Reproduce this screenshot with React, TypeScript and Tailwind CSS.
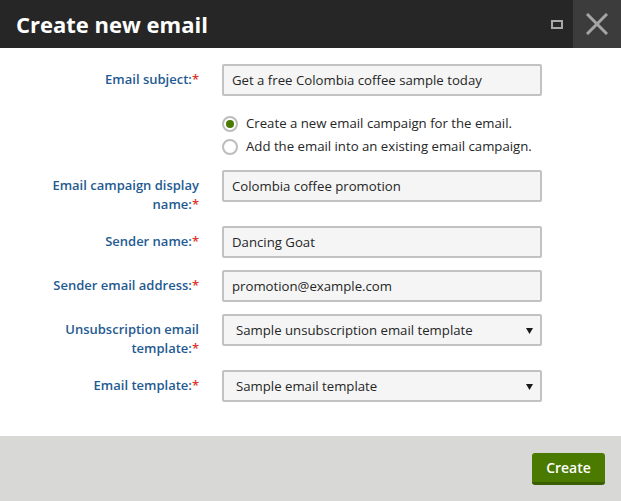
import React from "react";

const font = { fontFamily: '"Open Sans", "Noto Sans", sans-serif' };

function Label({ children }: { children: React.ReactNode }) {
  return (
    <div className="w-[199px] shrink-0 pt-[6px] text-right text-[13px] leading-[19px] font-semibold text-[#1f5b92]">
      {children}
      <span className="text-[#e0352b]">*</span>
    </div>
  );
}

function TextInput({ value }: { value: string }) {
  return (
    <div className="ml-[23px] flex h-[32px] w-[320px] items-center rounded-[2px] border-2 border-[#c2c2c2] bg-[#f5f5f5] pl-[8px] pt-[1px] text-[13.2px] text-[#262626]">
      {value}
    </div>
  );
}

function SelectInput({ value }: { value: string }) {
  return (
    <div className="ml-[23px] flex h-[32px] w-[320px] items-center justify-between rounded-[2px] border-2 border-[#c2c2c2] bg-[#f5f5f5] pl-[12px] pr-[7px] pt-[1px] text-[13.2px] text-[#262626]">
      <span>{value}</span>
      <svg width="7" height="6" viewBox="0 0 7 6">
        <path d="M0 0 H7 L3.5 6 Z" fill="#1a1a1a" />
      </svg>
    </div>
  );
}

function Radio({ checked, label }: { checked?: boolean; label: string }) {
  return (
    <div className="flex h-[23px] items-center">
      <span className="flex h-[16px] w-[16px] items-center justify-center rounded-full border-2 border-[#bdbdbd] bg-white">
        {checked && <span className="h-[8px] w-[8px] rounded-full bg-[#4a7a00]" />}
      </span>
      <span className="ml-[8px] text-[13.2px] text-[#262626]">{label}</span>
    </div>
  );
}

export default function App() {
  return (
    <div className="flex h-[501px] w-[621px] flex-col bg-white" style={font}>
      <div className="flex h-[48px] shrink-0 items-center bg-[#262626]">
        <div className="flex-1 pl-[16px] pt-[1px] text-[22px] font-bold text-white">Create new email</div>
        <div className="mr-[10px] h-[9px] w-[12px] border-2 border-[#a8a8a8]" />
        <div className="flex h-[48px] w-[48px] items-center justify-center bg-[#3c3c3c]">
          <svg width="22" height="22" viewBox="0 0 22 22">
            <path d="M1 1 L21 21 M21 1 L1 21" stroke="#a5a5a5" strokeWidth="3" />
          </svg>
        </div>
      </div>
      <div className="flex flex-1 flex-col pt-[16px]">
        <div className="flex">
          <Label>Email subject:</Label>
          <TextInput value="Get a free Colombia coffee sample today" />
        </div>
        <div className="ml-[222px] mt-[12px] flex flex-col pt-[4px]">
          <Radio checked label="Create a new email campaign for the email." />
          <Radio label="Add the email into an existing email campaign." />
        </div>
        <div className="mt-[12px] flex h-[44px]">
          <Label>
            Email campaign display
            <br />
            name:
          </Label>
          <TextInput value="Colombia coffee promotion" />
        </div>
        <div className="mt-[12px] flex">
          <Label>Sender name:</Label>
          <TextInput value="Dancing Goat" />
        </div>
        <div className="mt-[12px] flex">
          <Label>Sender email address:</Label>
          <TextInput value="promotion@example.com" />
        </div>
        <div className="mt-[12px] flex h-[44px]">
          <Label>
            Unsubscription email
            <br />
            template:
          </Label>
          <SelectInput value="Sample unsubscription email template" />
        </div>
        <div className="mt-[12px] flex">
          <Label>Email template:</Label>
          <SelectInput value="Sample email template" />
        </div>
      </div>
      <div className="flex h-[65px] shrink-0 items-start justify-end bg-[#d8d9d7] pr-[16px] pt-[17px]">
        <button className="h-[32px] w-[73px] rounded-[3px] border-b-[3px] border-[#3a5f00] bg-[#4a7a00] text-[14px] font-semibold text-white">
          Create
        </button>
      </div>
    </div>
  );
}
